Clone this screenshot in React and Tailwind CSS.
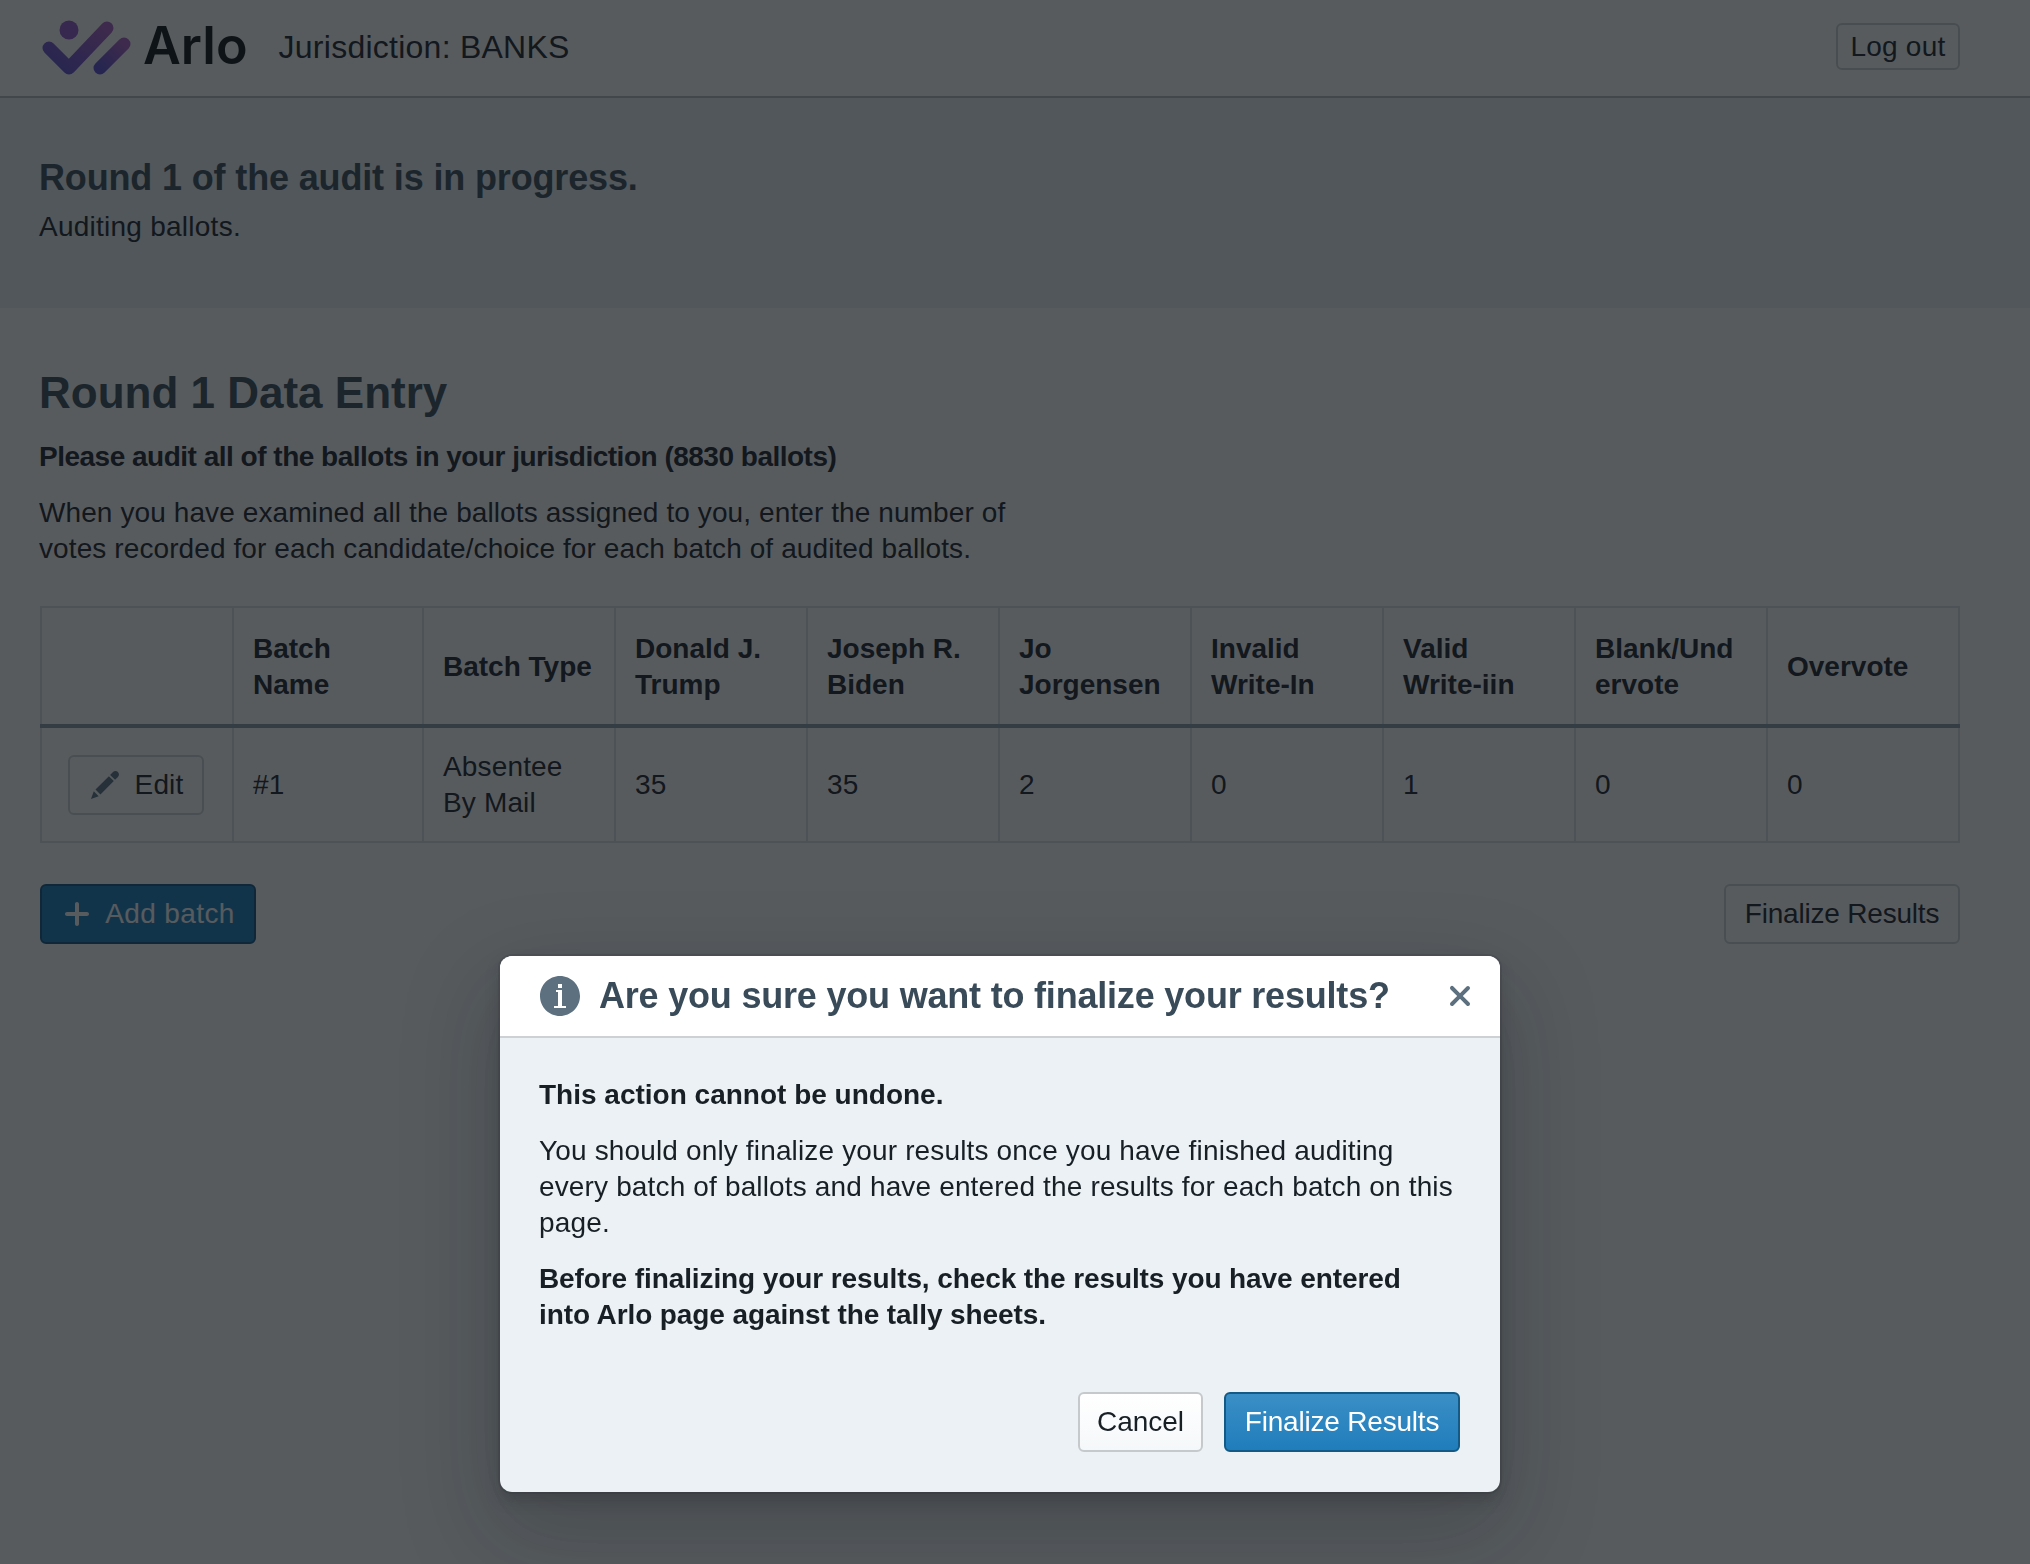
const columns = [
  { title: "", value: null },
  { title: "Batch Name", value: "#1" },
  { title: "Batch Type", value: "Absentee By Mail" },
  { title: "Donald J. Trump", value: "35" },
  { title: "Joseph R. Biden", value: "35" },
  { title: "Jo Jorgensen", value: "2" },
  { title: "Invalid Write-In", value: "0" },
  { title: "Valid Write-iin", value: "1" },
  { title: "Blank/Undervote", value: "0" },
  { title: "Overvote", value: "0" },
];

const colWidths = [192, 190, 192, 192, 192, 192, 192, 192, 192, 192];

function ArloLogo() {
  return (
    <svg width="92" height="60" viewBox="0 0 92 60" className="mt-[6px] shrink-0">
      <defs>
        <linearGradient id="arloGrad" x1="0" y1="1" x2="1" y2="0">
          <stop offset="0" stopColor="#5a4cd2" />
          <stop offset="1" stopColor="#ac5cc2" />
        </linearGradient>
      </defs>
      <g fill="none" stroke="url(#arloGrad)" strokeWidth="13" strokeLinecap="round" strokeLinejoin="round">
        <path d="M9 29 L29 49 L67 9" />
        <path d="M60 49 L84 25" />
      </g>
      <circle cx="29" cy="11" r="9.5" fill="#8f55c8" />
    </svg>
  );
}

function EditIcon() {
  return (
    <svg width="32" height="32" viewBox="0 0 16 16" fill="#5c7080">
      <path d="M3.25 10.26l2.47 2.47 6.69-6.69-2.46-2.47-6.7 6.69zM.99 14.99l3.86-1.39-2.46-2.44-1.4 3.83zm12.25-14c-.48 0-.92.2-1.24.51l-1.44 1.44 2.47 2.47 1.44-1.44c.32-.32.51-.75.51-1.24.01-.95-.77-1.74-1.74-1.74z" />
    </svg>
  );
}

function AddIcon() {
  return (
    <svg width="32" height="32" viewBox="0 0 16 16" fill="#ffffff">
      <path d="M13 7H9V3c0-.55-.45-1-1-1s-1 .45-1 1v4H3c-.55 0-1 .45-1 1s.45 1 1 1h4v4c0 .55.45 1 1 1s1-.45 1-1V9h4c.55 0 1-.45 1-1s-.45-1-1-1z" />
    </svg>
  );
}

function InfoIcon() {
  return (
    <svg width="40" height="40" viewBox="0 0 20 20" fill="#5c7080" className="shrink-0">
      <path
        fillRule="evenodd"
        d="M10 0C4.48 0 0 4.48 0 10s4.48 10 10 10 10-4.48 10-10S15.52 0 10 0zM9 4h2v2H9V4zm4 12H7v-1h2V8H8V7h3v8h2v1z"
      />
    </svg>
  );
}

function CloseIcon() {
  return (
    <svg width="40" height="40" viewBox="0 0 20 20" fill="#5c7080">
      <path d="M11.41 10l3.29-3.29c.19-.18.3-.43.3-.71a1.003 1.003 0 00-1.71-.71L10 8.59l-3.29-3.3a1.003 1.003 0 00-1.42 1.42L8.59 10 5.3 13.29c-.19.18-.3.43-.3.71a1.003 1.003 0 001.71.71l3.29-3.3 3.29 3.29c.18.19.43.3.71.3a1.003 1.003 0 00.71-1.71L11.41 10z" />
    </svg>
  );
}

function BatchTable() {
  return (
    <table className="w-[1918px] table-fixed border-collapse border-2 border-[#dde1e4] text-[28px] leading-9 text-[#182026]">
      <colgroup>
        {colWidths.map((w, i) => (
          <col key={i} style={{ width: w }} />
        ))}
      </colgroup>
      <thead>
        <tr className="h-[119px] border-b-4 border-b-[#8a9aa6]">
          {columns.map((c, i) => (
            <th key={i} className="border-x-2 border-[#dde1e4] px-[19px] pt-[2px] text-left align-middle font-bold break-words">
              {c.title === "Valid Write-iin" ? (
                <>
                  Valid <span className="whitespace-nowrap">Write-iin</span>
                </>
              ) : (
                c.title
              )}
            </th>
          ))}
        </tr>
      </thead>
      <tbody>
        <tr className="h-[116px] tracking-[0.15px]">
          {columns.map((c, i) =>
            i === 0 ? (
              <td key={i} className="border-x-2 border-[#dde1e4] pl-[26px] align-middle">
                <button className="flex h-[60px] w-[136px] items-center justify-center gap-[14px] rounded-[6px] border-2 border-[#ced3d6] text-[#182026]">
                  <EditIcon />
                  Edit
                </button>
              </td>
            ) : (
              <td key={i} className="border-x-2 border-[#dde1e4] px-[19px] align-middle">
                {c.value}
              </td>
            )
          )}
        </tr>
      </tbody>
    </table>
  );
}

function FinalizeDialog() {
  return (
    <div className="fixed inset-0 flex items-end justify-center bg-[rgba(16,22,26,0.7)] pr-[30px] pb-[72px]">
      <div className="w-[1000px] overflow-hidden rounded-[12px] bg-[#ebf1f5] shadow-[0_0_0_2px_rgba(16,22,26,0.1),0_8px_16px_rgba(16,22,26,0.2),0_36px_92px_12px_rgba(16,22,26,0.2)]">
        <div className="flex h-[82px] items-center border-b-2 border-[#cdd1d4] bg-white pb-[1px] pl-10 pr-5">
          <InfoIcon />
          <h4 className="ml-[19px] flex-1 text-[36px] leading-10 font-bold tracking-[-0.2px] text-[#394b59]">
            Are you sure you want to finalize your results?
          </h4>
          <CloseIcon />
        </div>
        <div className="px-[39px] pt-[39px] text-[28px] leading-9 text-[#182026]">
          <p className="font-bold">This action cannot be undone.</p>
          <p className="mt-5 tracking-[0.15px]">
            You should only finalize your results once you have finished auditing every batch of ballots and have
            entered the results for each batch on this page.
          </p>
          <p className="mt-5 pr-10 font-bold tracking-[-0.1px]">
            Before finalizing your results, check the results you have entered into Arlo page against the tally sheets.
          </p>
        </div>
        <div className="mt-[59px] flex justify-end gap-[21px] pb-10 pr-10 text-[28px]">
          <button className="h-[60px] w-[125px] rounded-[6px] border-2 border-[#c6c9cb] bg-gradient-to-b from-white to-[#f5f8fa] text-[#182026]">
            Cancel
          </button>
          <button className="h-[60px] w-[236px] rounded-[6px] border-2 border-[#135a86] bg-gradient-to-b from-[#3a8fc6] to-[#1f7dbb] tracking-[-0.2px] text-white">
            Finalize Results
          </button>
        </div>
      </div>
    </div>
  );
}

export default function App() {
  return (
    <div className="h-[1564px] overflow-hidden bg-white font-['Liberation_Sans',Arial,sans-serif] text-[28px] leading-9 text-[#182026]">
      <nav className="flex h-[98px] items-center border-b-2 border-[#b6bbbf] pb-1 pl-10 pr-[70px]">
        <ArloLogo />
        <span className="ml-[11px] font-['Inter',sans-serif] text-[52px] leading-none font-semibold text-[#0b0f12]">Arlo</span>
        <span className="ml-[31px] mt-[2px] text-[32px] tracking-[0.25px]">Jurisdiction: BANKS</span>
        <button className="ml-auto h-[47px] w-[124px] rounded-[6px] border-2 border-[#cdd1d4] pt-[1px] text-[28px] tracking-[0.2px] text-[#182026]">
          Log out
        </button>
      </nav>

      <section className="h-[210px] bg-[#ebf1f5] pl-[39px] pt-[58px]">
        <h3 className="text-[36px] leading-[44px] font-bold tracking-[-0.15px] text-[#394b59]">Round 1 of the audit is in progress.</h3>
        <p className="mt-[9px] tracking-[0.25px]">Auditing ballots.</p>
      </section>

      <main className="w-[2000px] px-10">
        <h2 className="mt-[59px] -ml-px text-[44px] leading-[52px] font-bold text-[#394b59]">Round 1 Data Entry</h2>
        <p className="mt-5 -ml-px font-bold tracking-[-0.5px]">Please audit all of the ballots in your jurisdiction (8830 ballots)</p>
        <p className="mt-5 -ml-px w-[1000px] tracking-[0.1px]">
          When you have examined all the ballots assigned to you, enter the number of votes recorded for each
          candidate/choice for each batch of audited ballots.
        </p>
        <div className="mt-[39px]">
          <BatchTable />
        </div>
        <div className="mt-[41px] flex justify-between">
          <button className="flex h-[60px] w-[216px] items-center justify-center gap-[12px] rounded-[6px] border-2 border-[#10527f] bg-[#1a7cbb] tracking-[0.4px] text-white">
            <AddIcon />
            Add batch
          </button>
          <button className="h-[60px] w-[236px] rounded-[6px] border-2 border-[#ced3d6] tracking-[-0.2px]">Finalize Results</button>
        </div>
      </main>

      <FinalizeDialog />
    </div>
  );
}
